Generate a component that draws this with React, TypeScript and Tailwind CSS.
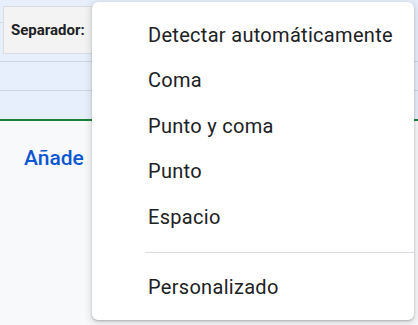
const options = ["Detectar automáticamente", "Coma", "Punto y coma", "Punto", "Espacio"];

export default function App() {
    return (
        <div className="relative h-[325px] w-[418px] overflow-hidden bg-[#f8f9fa] font-['Roboto',sans-serif]">
            {/* grid header area */}
            <div className="bg-[#e8effc]">
                <div className="flex h-[61px] items-start pt-[6px]">
                    <div className="mt-[16px] h-px w-[3px] bg-[#cfd6e4]" />
                    <div className="flex h-[48px] w-[110px] items-center border border-[#dadce0] bg-[#f3f3f3] pl-[7px] text-[15px] font-bold text-[#202124]">
                        Separador:
                    </div>
                </div>
                <div className="h-[29px] border-t border-[#cfd5e0]" />
                <div className="h-[29px] border-t border-[#cfd5e0]" />
            </div>
            <div className="h-[2px] bg-[#188038]" />

            <div className="pl-[24px] pt-[22px] text-[21px] font-medium text-[#0b57d0]">Añade</div>

            {/* dropdown menu */}
            <div className="absolute left-[92px] top-[2px] w-[322px] rounded-[6px] bg-white pb-[10px] pt-[10px] shadow-[0_2px_6px_2px_rgba(60,64,67,0.15),0_1px_2px_rgba(60,64,67,0.3)]">
                {options.map((o) => (
                    <div key={o} className="flex h-[45.5px] items-center pl-[56px] text-[20px] tracking-[0.3px] text-[#202124]">
                        {o}
                    </div>
                ))}
                <div className="my-[12px] ml-[53px] h-px bg-[#dadce0]" />
                <div className="flex h-[45.5px] items-center pl-[56px] text-[20px] tracking-[0.3px] text-[#202124]">
                    Personalizado
                </div>
            </div>
        </div>
    );
}
